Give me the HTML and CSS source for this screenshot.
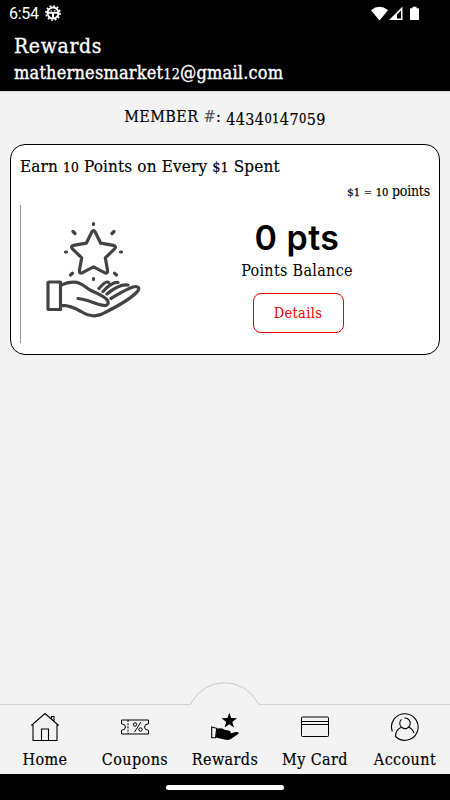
FILE: index.html
```html
<!DOCTYPE html>
<html lang="en">
<head>
<meta charset="utf-8">
<title>Rewards</title>
<link rel="stylesheet" href="styles.css">
</head>
<body>
<div class="app">
  <header class="top">
    <div class="status">
      <span class="time">6:54</span>
      <svg class="gear" width="16" height="16" viewBox="0 0 16 16" fill="none" stroke="#fff">
        <circle cx="8" cy="8" r="5.5" stroke-width="1.9"/>
        <circle cx="8" cy="8" r="7" stroke-width="1.7" stroke-dasharray="1.9 1.765"/>
        <path d="M3 7.8h10M8 8v5" stroke-width="2"/><path d="M5.500 5.800h1.500M9 5.800h1.500" stroke-width="1"/>
      </svg>
      <svg class="signals" width="52" height="16" viewBox="0 0 52 16" fill="#fff">
        <path d="M0 4.2Q8.500-2.700 17 4.200L8.500 14.500z"/>
        <path fill-rule="evenodd" d="M31.500 0.500V14H18zM30 4.500L26 8.500v4h4z"/>
        <path d="M41.500 0.700h4v1.600h1.800q.7 0 .7.700v10.300q0 .7-.7.700h-7.600q-.7 0-.7-.7V3q0-.7.7-.7h1.800z"/>
      </svg>
    </div>
    <h1 class="title">Rewards</h1>
    <div class="email">mathernesmarket<span class="lo">12</span>@gmail.com</div>
  </header>
  <main class="content">
    <div class="member">MEMBER <i class="thin">#</i>: <span class="dn">4434</span><span class="lo">01</span><span class="dn">47</span><span class="lo">0</span><span class="dn">59</span></div>
    <section class="card">
      <div class="earn">Earn <span class="lo">10</span> Points on Every <span class="cash">$</span><span class="lo">1</span> Spent</div>
      <div class="rate"><span class="cash">$</span><span class="lo">1</span> <i class="thin eq">=</i> <span class="lo">10</span> points</div>
      <div class="panel">
        <div class="art">
          <svg width="96" height="98" viewBox="0 0 96 98" fill="none" stroke="#434345" stroke-width="3.200" stroke-linecap="round" stroke-linejoin="round">
            <path d="M45.800 11Q47.500 8.200 49.200 11L54.700 22.200 67.500 24.400Q70.800 25.300 68.600 27.800L59.300 36.800 61.600 49.700Q61.600 53 58.500 51.700L47.500 45.900 36.500 51.700Q33.400 53 33.400 49.700L35.700 36.800 26.400 27.800Q24.200 25.300 27.500 24.400L40.300 22.200z"/>
            <path d="M47.500 2.500v1M27 10.500l2 2M68 10.500l-2 2M19.500 31h1M74.500 31h1M26.500 52.200l-2 1.800M68.500 52.200l2 1.800M47.500 57.500v1"/>
            <path d="M3 61Q2 61 2 62V87.500Q2 88.500 3 88.500H14.500V61zM14.500 64.500C21 61.500 28 60 34 62.500C38 64 41 67.500 45 69.500C53 73 60 76 61.500 79.500C63 82 61.500 84.800 58.500 84.500C49 83.500 43 78.500 32 77.500M14.500 84.500C22 84 28 86.500 35 90.500C44 96 52 96 59 91.500C70 86 83 79 90.500 71.500C95 67 92 64.500 87 66C79 68.500 72 73.500 65 77.500M53 67.500C56 64 60 59.500 62.500 61.500M57 70.500C62 65 67 61 72 61.500M61 73C68 67 75 63 82 64"/>
          </svg>
        </div>
        <div class="balance">
          <div class="points">0 pts</div>
          <div class="caption">Points Balance</div>
          <div class="details">Details</div>
        </div>
      </div>
    </section>
  </main>
  <nav class="tabs">
    <svg class="bump" width="72" height="26" viewBox="0 0 72 26" fill="#f3f3f3"><path d="M0 24Q1.500 24 2.500 21.500A38.500 38.500 0 0 1 67.500 21.500Q69 24 71 24V26H0z"/><path d="M1 23.500Q2 23.500 3 20.500A37.500 37.500 0 0 1 68 20.500Q69 23.500 71 23.500" fill="none" stroke="#c9c9c9"/></svg>
    <div class="tab home">
      <svg width="30" height="30" viewBox="0 0 30 30" fill="none" stroke="#000"><path d="M1.300 13.500L15 1.500l13.700 12M3 12v16.500h24V12M11.500 28.500V17h7v11.500M21.500 6.500V4.500h2.500V9" stroke-width="1.100"/></svg>
      <span>Home</span>
    </div>
    <div class="tab coupons">
      <svg width="30" height="30" viewBox="0 0 30 30" fill="none" stroke="#000"><path d="M1.500 8H28.500V11.800Q24.500 12 24.500 15T28.500 18.300V22H1.500V18.300Q5.500 18 5.500 15T1.500 11.800z"/><path d="M8 8v14" stroke-dasharray="2 1.200"/><circle cx="15" cy="12.500" r="1.700"/><circle cx="20.500" cy="17.500" r="1.700"/><path d="M21 10l-6.500 10"/></svg>
      <span>Coupons</span>
    </div>
    <div class="tab rewards">
      <svg width="30" height="30" viewBox="0 0 30 30"><path d="M19.300 .8L21.200 6.100 27 6.200 22.300 9.900 24 15.500 19.300 12.200 14.600 15.500 16.300 9.900 11.600 6.200 17.400 6.100z"/><path d="M6.700 16.800Q11 15.500 14.500 17.700L19.500 18.700Q21 19.500 20.800 21.400L24.500 20.200Q28 19.600 28.800 20.700Q28.500 22.500 26 23.500L20.500 27.200Q18 28.600 14.500 27.500L5.800 25.500z"/><path d="M1.700 15L6.700 16.300 5.500 25.700H1.700z" fill="none" stroke="#000" stroke-width="1.100"/></svg>
      <span>Rewards</span>
    </div>
    <div class="tab mycard">
      <svg width="30" height="30" viewBox="0 0 30 30" fill="none" stroke="#000"><rect x="1.500" y="5" width="27" height="19.500" rx=".8"/><path d="M1.500 9.500h27M1.500 12.500h27"/></svg>
      <span>My Card</span>
    </div>
    <div class="tab account">
      <svg width="30" height="30" viewBox="0 0 30 30" fill="none" stroke="#000" stroke-width="1.100"><path d="M2.300 19.500A13.300 13.300 0 1 1 5.500 24.500C5.500 19.800 8 16.500 11.500 15.300M18.500 15.300Q22.500 16.500 24 21"/><path d="M11.500 7.300A5.300 5.300 0 1 0 14.500 6"/></svg>
      <span>Account</span>
    </div>
  </nav>
  <footer class="system"><div class="pill"></div></footer>
</div>
</body>
</html>
```
FILE: styles.css
```css
* { box-sizing: border-box; }
body {
  margin: 0;
  font-family: "DejaVu Serif Condensed", "DejaVu Serif", serif;
  font-stretch: condensed;
  color: #000;
}
.app { width: 450px; height: 800px; display: flex; flex-direction: column; background: #f3f3f3; overflow: hidden; }
.top { height: 92px; background: #000; color: #fff; border-bottom: 1px solid #d5d5d5; flex: none; }
.status { height: 32px; padding: 5px 26px 0 9px; display: flex; align-items: flex-start; }
.time { font: 16px/18px Roboto, sans-serif; letter-spacing: -0.3px; width: 36px; white-space: nowrap; }
.signals { margin: 1px 1px 0 auto; width: 52px; }
.title { margin: 0; padding-left: 14px; font-size: 21px; line-height: 28px; font-weight: 400; letter-spacing: 0.65px; -webkit-text-stroke: 0.3px; }
.email { padding-left: 14px; font-size: 18px; line-height: 26px; letter-spacing: 0.2px; -webkit-text-stroke: 0.35px; white-space: nowrap; }
.content { flex: 1; padding: 11px 10px 0; }
.thin { font-style: normal; color: #555; }
.eq { font-size: 0.8em; }
/* old-style figures: x-height digits and descending digits */
.lo { font-size: 0.8em; line-height: 1; -webkit-text-stroke: 0.25px; }
.member .lo { position: relative; top: 1px; }
.dn { position: relative; top: 3px; }
.cash { font-size: 0.85em; line-height: 1; }
.member { height: 28px; line-height: 28px; font-size: 16px; letter-spacing: 0.4px; text-align: center; white-space: nowrap; -webkit-text-stroke: 0.15px; }
.card { margin-top: 13px; height: 211px; border: 1.5px solid #000; border-radius: 15px; background: #fff; padding: 7px 9px; }
.earn { height: 28px; font-size: 17px; line-height: 28px; letter-spacing: 0.15px; white-space: nowrap; -webkit-text-stroke: 0.15px; }
.rate { height: 22px; font-size: 14px; line-height: 22px; text-align: right; white-space: nowrap; letter-spacing: -0.2px; -webkit-text-stroke: 0.1px; }
.panel { height: 138px; margin-top: 3px; display: flex; border-left: 1px solid #999; }
.art { width: 146px; padding: 16px 0 0 25px; }
.balance { width: 260px; display: flex; flex-direction: column; align-items: center; white-space: nowrap; }
.points { font: 600 34px/42px Inter, sans-serif; letter-spacing: 0.5px; margin-top: 12px; }
.caption { font-size: 16px; line-height: 24px; letter-spacing: 0.3px; }
.details { width: 91px; height: 40px; margin: 10px 0 0 2px; border: 1.5px solid #e90000; border-radius: 8px; color: #e90000; font-size: 14.5px; letter-spacing: 0.35px; line-height: 38px; text-align: center; }
.tabs { position: relative; height: 70px; border-top: 1px solid #d2d2d2; display: grid; grid-template-columns: repeat(5, 1fr); flex: none; }
.bump { position: absolute; left: 189px; top: -24px; }
.tab { position: relative; display: flex; flex-direction: column; align-items: center; padding-top: 7px; font-size: 16px; line-height: 24px; letter-spacing: 0.4px; white-space: nowrap; -webkit-text-stroke: 0.15px; }
.tab span { margin-top: 6px; }
.system { height: 26px; background: #000; padding-top: 11px; flex: none; }
.pill { width: 118px; height: 5px; border-radius: 3px; background: #fff; margin: 0 auto; }
```
